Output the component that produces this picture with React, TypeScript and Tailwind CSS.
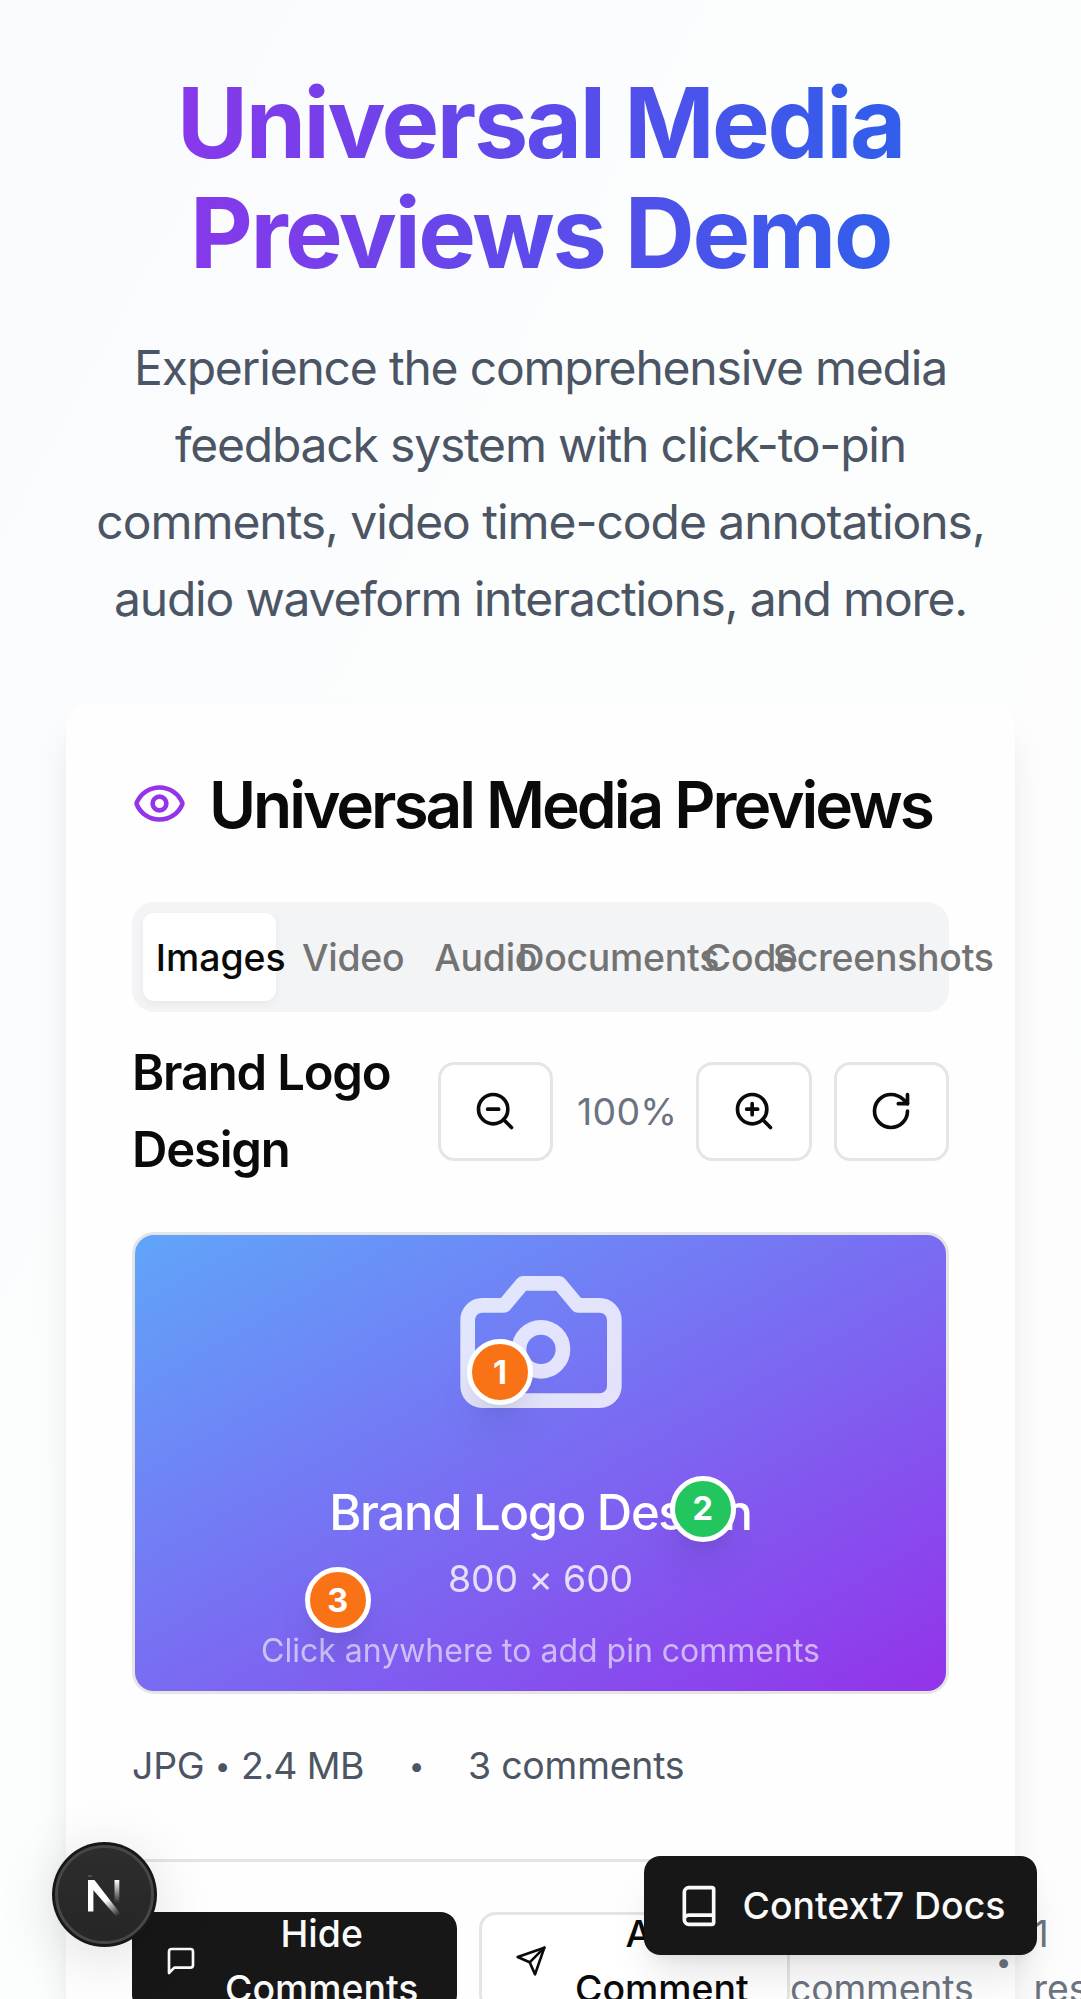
import type { ReactNode } from 'react';

const stroke = {
  fill: 'none',
  stroke: 'currentColor',
  strokeWidth: 2,
  strokeLinecap: 'round',
  strokeLinejoin: 'round',
  viewBox: '0 0 24 24',
} as const;

function Icon({ className, children }: { className: string; children: ReactNode }) {
  return (
    <svg {...stroke} className={className} aria-hidden="true">
      {children}
    </svg>
  );
}

const tabs = ['Images', 'Video', 'Audio', 'Documents', 'Code', 'Screenshots'];

const pins = [
  { id: 1, x: 45, y: 30, color: 'bg-[#f97316]' },
  { id: 2, x: 70, y: 60, color: 'bg-[#22c55e]' },
  { id: 3, x: 25, y: 80, color: 'bg-[#f97316]' },
];

function ToolButton({ children }: { children: ReactNode }) {
  return (
    <button className="flex h-[99px] w-[115.5px] shrink-0 items-center justify-center rounded-[16.5px] border-[3px] border-[#e5e5e5] bg-white">
      <Icon className="size-[44px]">{children}</Icon>
    </button>
  );
}

function ImagePreview() {
  return (
    <div className="relative mt-[44px] h-[462px] overflow-hidden rounded-[22px] border-[3px] border-[#e5e5e5] bg-linear-to-br/srgb from-[#60a5fa] to-[#9333ea]">
      <div className="flex h-full flex-col items-center justify-center text-white">
        <svg {...stroke} className="size-[176px] shrink-0 opacity-80" aria-hidden="true">
          <path d="M14.5 4h-5L7 7H4a2 2 0 0 0-2 2v9a2 2 0 0 0 2 2h16a2 2 0 0 0 2-2V9a2 2 0 0 0-2-2h-3l-2.5-3z" />
          <circle cx="12" cy="13" r="3" />
        </svg>
        <p className="mt-[44px] text-[49px] leading-[77px] font-medium tracking-[-1.3px]">Brand Logo Design</p>
        <p className="text-[37.4px] leading-[55px] tracking-[-0.16px] opacity-80">800 × 600</p>
        <p className="mt-[22px] pt-px text-[32px] leading-[43px] opacity-60">Click anywhere to add pin comments</p>
      </div>
      {pins.map((pin) => (
        <div
          key={pin.id}
          className={`absolute flex size-[66px] -translate-x-1/2 -translate-y-1/2 items-center justify-center rounded-full border-[5.5px] border-white pt-[2px] text-[32.5px] leading-none font-bold text-white shadow-[0_27px_41px_-8px_rgba(0,0,0,0.1),0_11px_16px_-11px_rgba(0,0,0,0.1)] ${pin.color}`}
          style={{ left: `${pin.x}%`, top: `${pin.y}%` }}
        >
          {pin.id}
        </div>
      ))}
    </div>
  );
}

function NextBadge() {
  return (
    <div className="absolute top-[1842px] left-[52px] flex size-[105px] items-center justify-center rounded-full bg-[#171717] shadow-[0_10px_60px_rgba(0,0,0,0.13)]">
      <div className="flex size-[99px] items-center justify-center rounded-full border-[3.5px] border-[#474747] bg-linear-to-b from-[#2d2d2d] to-[#262626]">
        <svg viewBox="0 0 40 44" className="h-[44px] w-[40px]" aria-hidden="true">
          <defs>
            <linearGradient id="diagonal" x1="20" y1="22" x2="34" y2="42" gradientUnits="userSpaceOnUse">
              <stop offset="0.2" stopColor="#fff" />
              <stop offset="1" stopColor="#fff" stopOpacity="0" />
            </linearGradient>
            <linearGradient id="stem" x1="0" y1="7" x2="0" y2="30" gradientUnits="userSpaceOnUse">
              <stop offset="0" stopColor="#fff" />
              <stop offset="1" stopColor="#fff" stopOpacity="0" />
            </linearGradient>
          </defs>
          <path d="M3.3 3h3.6" stroke="#777" strokeWidth="1" />
          <rect x="3" y="7" width="5.4" height="31.5" fill="#fff" />
          <path d="M3 7h6.4L36.5 42l-4 3L3 11z" fill="url(#diagonal)" />
          <rect x="29.5" y="7" width="4.8" height="23" fill="url(#stem)" />
        </svg>
      </div>
    </div>
  );
}

export default function App() {
  return (
    <div className="relative h-[1999px] w-full overflow-hidden bg-linear-to-br from-[#f8fafd] via-[#fcfdfd] via-40% to-[#fdfdfd] px-[66px] pt-[68px] font-['Inter',sans-serif] text-[#0a0a0a]">
      <header className="flex flex-col items-center text-center">
        <h1 className="bg-linear-to-r/srgb from-[#9333ea] to-[#2563eb] bg-clip-text px-[90px] text-[97px] leading-[110px] font-bold tracking-[-2.42px] whitespace-nowrap text-transparent">
          Universal Media
          <br />
          Previews Demo
        </h1>
        <p className="mt-[41px] text-[48px] leading-[77px] tracking-[-1.2px] whitespace-nowrap text-[#4b5563]">
          Experience the comprehensive media
          <br />
          feedback system with click-to-pin
          <br />
          <span className="tracking-[-1.05px]">comments, video time-code annotations,</span>
          <br />
          audio waveform interactions, and more.
        </p>
      </header>

      <main className="mt-[67px] h-[1500px] rounded-[22px] bg-[#fefefe] px-[66px] pt-[66px] shadow-[0_27px_41px_-8px_rgba(0,0,0,0.1),0_11px_16px_-11px_rgba(0,0,0,0.1)]">
        <div className="flex h-[66px] items-center">
          <Icon className="size-[55px] shrink-0 text-[#9333ea]">
            <path d="M2.06 12.35a1 1 0 0 1 0-.7 10.75 10.75 0 0 1 19.88 0 1 1 0 0 1 0 .7 10.75 10.75 0 0 1-19.88 0" />
            <circle cx="12" cy="12" r="3" />
          </Icon>
          <h2 className="ml-[22px] pt-[3px] text-[64px] leading-[66px] font-semibold tracking-[-3.04px] whitespace-nowrap">Universal Media Previews</h2>
        </div>

        <div className="mt-[66px] grid h-[110px] grid-cols-6 rounded-[22px] bg-[#f3f4f6] p-[11px] text-[37.4px] font-medium text-[#737373]">
          {tabs.map((tab, i) => (
            <div
              key={tab}
              className={
                i === 0
                  ? 'flex min-w-0 items-center justify-center rounded-[11px] bg-white pt-[2px] pl-[23px] text-[#0a0a0a] shadow-[0_3px_8px_rgba(0,0,0,0.05)]'
                  : 'flex min-w-0 items-center justify-center pt-[2px] pl-[23px] tracking-[-0.25px]'
              }
            >
              <span className="whitespace-nowrap">{tab}</span>
            </div>
          ))}
        </div>

        <div className="mt-[22px] flex h-[154px] items-center justify-between">
          <h3 className="text-[49px] leading-[77px] font-semibold tracking-[-1.2px]">
            Brand Logo
            <br />
            Design
          </h3>
          <div className="flex items-center gap-[22px]">
            <ToolButton>
              <circle cx="11" cy="11" r="8" />
              <path d="m21 21-4.35-4.35M8 11h6" />
            </ToolButton>
            <span className="w-[99px] pl-[2px] text-center text-[37.4px] leading-[55px] tracking-[0.3px] text-[#6b7280]">100%</span>
            <ToolButton>
              <circle cx="11" cy="11" r="8" />
              <path d="m21 21-4.35-4.35M11 8v6M8 11h6" />
            </ToolButton>
            <ToolButton>
              <path d="M21 12a9 9 0 1 1-9-9c2.52 0 4.93 1 6.74 2.74L21 8" />
              <path d="M21 3v5h-5" />
            </ToolButton>
          </div>
        </div>

        <ImagePreview />

        <div className="mt-[44px] flex h-[55px] items-center text-[37.4px] leading-[55px] tracking-[-0.2px] whitespace-nowrap text-[#4b5563]">
          <span className="w-[72px]">JPG</span>
          <span className="w-[37px] pt-px text-center text-[28px]">•</span>
          <span className="w-[124px] tracking-[-0.6px]">2.4 MB</span>
          <span className="w-[103px] pt-px text-center text-[28px]">•</span>
          <span>3 comments</span>
        </div>

        <div className="mt-[66px] border-t-[3px] border-[#e5e5e5] pt-[44px]">
          <div className="flex h-[110px] items-center text-center text-[37.4px] leading-[55px] whitespace-nowrap">
            <button className="flex h-[99px] w-[325px] shrink-0 items-center rounded-[16.5px] bg-[#171717] pl-[33px] font-medium text-[#fafafa]">
              <Icon className="size-[32px] shrink-0">
                <path d="M21 15a2 2 0 0 1-2 2H7l-4 4V5a2 2 0 0 1 2-2h14a2 2 0 0 1 2 2z" />
              </Icon>
              <span className="ml-[28px]">
                Hide
                <br />
                Comments
              </span>
            </button>
            <button className="ml-[22px] flex h-[99px] w-[311px] shrink-0 items-center rounded-[16.5px] border-[3px] border-[#e5e5e5] bg-white pl-[33px] font-medium">
              <Icon className="size-[32px] shrink-0">
                <path d="m22 2-7 20-4-9-9-4Z" />
                <path d="M22 2 11 13" />
              </Icon>
              <span className="ml-[28px]">
                Add
                <br />
                Comment
              </span>
            </button>
            <div className="flex shrink-0 items-center text-left text-[#6b7280]">
              <span className="tracking-[-0.15px]">
                3
                <br />
                comments
              </span>
              <span className="w-[60px] pt-[2px] text-center text-[28px]">•</span>
              <span>
                1
                <br />
                resolved
              </span>
            </div>
          </div>
        </div>
      </main>

      <NextBadge />

      <button className="absolute top-[1856px] left-[643.5px] flex h-[99px] w-[393.5px] items-center rounded-[16.5px] bg-[#171717] pl-[33px] text-[37.4px] font-medium whitespace-nowrap text-[#fafafa] shadow-[0_27px_41px_-8px_rgba(0,0,0,0.1),0_11px_16px_-11px_rgba(0,0,0,0.1)]">
        <Icon className="size-[44px] shrink-0">
          <path d="M4 19.5v-15A2.5 2.5 0 0 1 6.5 2H19a1 1 0 0 1 1 1v18a1 1 0 0 1-1 1H6.5a1 1 0 0 1 0-5H20" />
        </Icon>
        <span className="ml-[22px] pt-[2px]">Context7 Docs</span>
      </button>
    </div>
  );
}
